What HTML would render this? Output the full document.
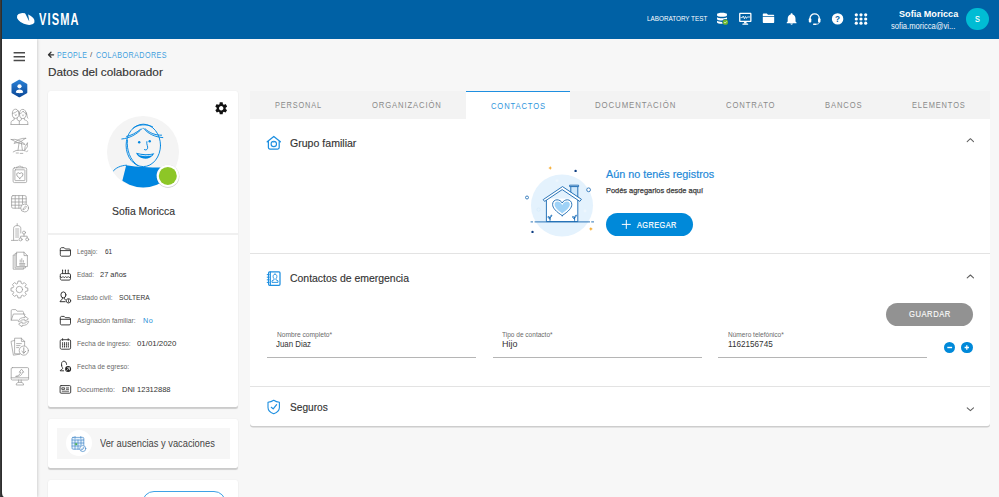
<!DOCTYPE html>
<html lang="es">
<head>
<meta charset="utf-8">
<title>Datos del colaborador</title>
<style>
*{box-sizing:border-box;margin:0;padding:0}
html,body{width:999px;height:497px;overflow:hidden;background:#f7f7f7;font-family:"Liberation Sans",sans-serif;color:#333}
body{position:relative}
.abs{position:absolute}
.t{position:absolute;white-space:nowrap;line-height:1}
svg{position:absolute;overflow:visible}
#frame{left:0;top:0;width:2px;height:497px;background:linear-gradient(90deg,#3b3b3b 50%,#2e2e2e 50%);z-index:50}
#hdr{left:0;top:0;width:999px;height:39px;background:#0061a5;z-index:10}
#side{left:2px;top:39px;width:34.5px;height:458px;background:#fff;box-shadow:1px 0 3px rgba(0,0,0,.15);z-index:5;border-bottom-left-radius:2.5px 5px}
.card{position:absolute;background:#fff;border-radius:2.5px;box-shadow:0 1.3px .8px rgba(0,0,0,.17),0 0 2px rgba(0,0,0,.06)}
.hl{position:absolute;height:1px;background:#e4e4e4}
.ul{position:absolute;height:1px;background:#b5b5b5}
.lab{font-size:7.3px;color:#6a6a6a}
.val{font-size:8px;color:#333}
.tab{font-size:8.7px;letter-spacing:1px;color:#8a8a8a}
.sec{font-size:11.3px;color:#333;-webkit-text-stroke:.15px #333}
</style>
</head>
<body>

<!-- ===== header ===== -->
<div id="hdr" class="abs">
  <svg style="left:0;top:0" width="90" height="39" viewBox="0 0 90 39">
    <ellipse cx="25.8" cy="19" rx="9.3" ry="5.2" transform="rotate(22 25.8 19)" fill="#fff"/>
    <path d="M24.2 11.5L27.8 12.3L29.3 21.5Z" fill="#0061a5"/>
  </svg>
  <span class="t" style="left:38.9px;top:12px;font-size:15.8px;font-weight:bold;letter-spacing:1.6px;color:#fff;transform:scaleX(0.7000);transform-origin:0 50%">VISMA</span>
  <span class="t" style="left:647px;top:16px;font-size:6.9px;color:#fff;transform:scaleX(0.9189);transform-origin:0 50%">LABORATORY TEST</span>
  <span class="t" style="left:898.8px;top:9px;font-size:9.7px;font-weight:bold;color:#fff;transform:scaleX(0.9397);transform-origin:0 50%">Sofia Moricca</span>
  <span class="t" style="left:891px;top:23px;font-size:8.2px;color:#f4f8fc;transform:scaleX(0.9281);transform-origin:0 50%">sofia.moricca@vi...</span>
  <div class="abs" style="left:966.3px;top:7.6px;width:22.4px;height:22.4px;border-radius:50%;background:#00bcd4"></div>
  <span class="t" style="left:975.1px;top:15px;font-size:8.3px;color:#fff;-webkit-text-stroke:.15px #fff;transform:scaleX(0.8654);transform-origin:0 50%">S</span>
</div>

<!-- ===== sidebar ===== -->
<div class="abs" style="left:0;top:485px;width:9px;height:12px;background:#333;z-index:4"></div>
<div id="side" class="abs"></div>
<div id="frame" class="abs"></div>

<!-- ===== breadcrumb / title ===== -->
<span class="t" style="left:56.8px;top:51px;font-size:8.4px;letter-spacing:.5px;color:#3f9fde;transform:scaleX(0.8326);transform-origin:0 50%">PEOPLE</span>
<span class="t" style="left:90.3px;top:51px;font-size:7.9px;color:#555;transform:scaleX(1.0440);transform-origin:0 50%">/</span>
<span class="t" style="left:96px;top:51px;font-size:8.4px;letter-spacing:.5px;color:#3f9fde;transform:scaleX(0.8563);transform-origin:0 50%">COLABORADORES</span>
<span class="t" style="left:48.2px;top:66px;font-size:11.6px;color:#333;-webkit-text-stroke:.15px #333;transform:scaleX(1.0120);transform-origin:0 50%">Datos del colaborador</span>

<!-- ===== left cards ===== -->
<div class="card" style="left:48px;top:91px;width:190px;height:315.5px"></div>
<div class="hl" style="left:48px;top:233.2px;width:190px;height:1.6px;background:#f0f0f0"></div>
<div class="abs" style="left:107px;top:116px;width:72px;height:72px;border-radius:50%;background:#f4f4f4"></div>
<span class="t" style="left:111.7px;top:207px;font-size:10.4px;color:#333;-webkit-text-stroke:.12px #333;transform:scaleX(1.0007);transform-origin:0 50%">Sofia Moricca</span>

<span class="t lab" style="left:77px;top:248px;transform:scaleX(0.8558);transform-origin:0 50%">Legajo:</span><span class="t val" style="left:105.1px;top:248px;transform:scaleX(0.8084);transform-origin:0 50%">61</span>
<span class="t lab" style="left:77px;top:271px;transform:scaleX(0.8911);transform-origin:0 50%">Edad:</span><span class="t val" style="left:100.4px;top:271px;transform:scaleX(0.9308);transform-origin:0 50%">27 años</span>
<span class="t lab" style="left:77px;top:294px;transform:scaleX(0.9117);transform-origin:0 50%">Estado civil:</span><span class="t val" style="left:118.7px;top:294px;transform:scaleX(0.8354);transform-origin:0 50%">SOLTERA</span>
<span class="t lab" style="left:77px;top:317px;transform:scaleX(0.9276);transform-origin:0 50%">Asignación familiar:</span><span class="t val" style="left:143px;top:317px;color:#2a8fd8;letter-spacing:.6px;transform:scaleX(0.9043);transform-origin:0 50%">No</span>
<span class="t lab" style="left:77px;top:340px;transform:scaleX(0.9192);transform-origin:0 50%">Fecha de ingreso:</span><span class="t val" style="left:137.4px;top:340px;transform:scaleX(0.9813);transform-origin:0 50%">01/01/2020</span>
<span class="t lab" style="left:77px;top:363px;transform:scaleX(0.9191);transform-origin:0 50%">Fecha de egreso:</span>
<span class="t lab" style="left:77px;top:386px;transform:scaleX(0.9658);transform-origin:0 50%">Documento:</span><span class="t val" style="left:121.7px;top:386px;transform:scaleX(0.9400);transform-origin:0 50%">DNI 12312888</span>

<div class="card" style="left:48px;top:419px;width:190px;height:49px"></div>
<div class="abs" style="left:57px;top:428px;width:173px;height:30.6px;background:#f6f6f6"></div>
<div class="abs" style="left:65.5px;top:430.2px;width:26px;height:26px;border-radius:50%;background:#fff"></div>
<span class="t" style="left:100.1px;top:438px;font-size:11.3px;color:#444;transform:scaleX(0.8234);transform-origin:0 50%">Ver ausencias y vacaciones</span>

<div class="card" style="left:48px;top:480px;width:190px;height:40px"></div>
<div class="abs" style="left:141.6px;top:490.6px;width:84px;height:24px;border:1px solid #3fa2e6;border-radius:12px"></div>

<!-- ===== tabs + main panel ===== -->
<div class="abs" style="left:250px;top:91px;width:740px;height:27.6px;background:#f3f3f3"></div>
<div class="card" style="left:250px;top:118.5px;width:740px;height:307.9px;border-radius:0 0 3px 3px;box-shadow:0 1.4px .6px rgba(0,0,0,.17)"></div>
<div class="abs" style="left:466px;top:90.8px;width:104.2px;height:28.2px;background:#fff;border-top:1.6px solid #1f8fe0"></div>
<span class="t tab" style="left:275px;top:101px;transform:scaleX(0.8467);transform-origin:0 50%">PERSONAL</span>
<span class="t tab" style="left:371.6px;top:101px;transform:scaleX(0.8823);transform-origin:0 50%">ORGANIZACIÓN</span>
<span class="t tab" style="left:491px;top:102px;color:#2f95dc;transform:scaleX(0.8745);transform-origin:0 50%">CONTACTOS</span>
<span class="t tab" style="left:595.4px;top:101px;transform:scaleX(0.9016);transform-origin:0 50%">DOCUMENTACIÓN</span>
<span class="t tab" style="left:725.8px;top:101px;transform:scaleX(0.8844);transform-origin:0 50%">CONTRATO</span>
<span class="t tab" style="left:825.1px;top:101px;transform:scaleX(0.8752);transform-origin:0 50%">BANCOS</span>
<span class="t tab" style="left:911.9px;top:101px;transform:scaleX(0.8594);transform-origin:0 50%">ELEMENTOS</span>

<div class="hl" style="left:250px;top:253px;width:740px;height:1.3px;background:#e3e3e3"></div>
<div class="hl" style="left:250px;top:386px;width:740px;height:1.3px;background:#e3e3e3"></div>

<span class="t sec" style="left:290px;top:138px;transform:scaleX(0.9358);transform-origin:0 50%">Grupo familiar</span>
<span class="t sec" style="left:289.8px;top:273px;transform:scaleX(0.9244);transform-origin:0 50%">Contactos de emergencia</span>
<span class="t sec" style="left:289.8px;top:402px;transform:scaleX(0.8960);transform-origin:0 50%">Seguros</span>

<!-- empty state -->
<span class="t" style="left:606.2px;top:168px;font-size:11.7px;color:#2389d8;-webkit-text-stroke:.2px #2389d8;transform:scaleX(0.9252);transform-origin:0 50%">Aún no tenés registros</span>
<span class="t" style="left:606.2px;top:187px;font-size:8.1px;color:#3a3a3a;-webkit-text-stroke:.25px #3a3a3a;transform:scaleX(0.9173);transform-origin:0 50%">Podés agregarlos desde aquí</span>
<div class="abs" style="left:606px;top:213px;width:86.8px;height:22.8px;border-radius:12px;background:#0089d9"></div>
<span class="t" style="left:637px;top:221px;font-size:8.7px;letter-spacing:.5px;color:#fff;-webkit-text-stroke:.2px #fff;transform:scaleX(0.8460);transform-origin:0 50%">AGREGAR</span>

<!-- form -->
<div class="abs" style="left:886.4px;top:303px;width:86.6px;height:23px;border-radius:12px;background:#929292"></div>
<span class="t" style="left:908.7px;top:310px;font-size:8.8px;letter-spacing:.6px;color:#fbfbfb;-webkit-text-stroke:.15px #fbfbfb;transform:scaleX(0.8676);transform-origin:0 50%">GUARDAR</span>

<span class="t lab" style="left:276.7px;top:331px;font-size:7px;transform:scaleX(0.9488);transform-origin:0 50%">Nombre completo*</span>
<span class="t val" style="left:276.2px;top:339px;font-size:9.5px;transform:scaleX(0.8284);transform-origin:0 50%">Juan Diaz</span>
<div class="ul" style="left:267px;top:356.6px;width:208.6px"></div>

<span class="t lab" style="left:501.8px;top:331px;font-size:7px;transform:scaleX(0.9330);transform-origin:0 50%">Tipo de contacto*</span>
<span class="t val" style="left:501.8px;top:339px;font-size:9.5px;transform:scaleX(0.9405);transform-origin:0 50%">Hijo</span>
<div class="ul" style="left:493px;top:356.6px;width:208.6px"></div>

<span class="t lab" style="left:727.9px;top:331px;font-size:7px;transform:scaleX(0.9356);transform-origin:0 50%">Número telefónico*</span>
<span class="t val" style="left:728.4px;top:339px;font-size:9.5px;transform:scaleX(0.8573);transform-origin:0 50%">1162156745</span>
<div class="ul" style="left:718.4px;top:356.6px;width:208.4px"></div>

<div class="abs" style="left:943.9px;top:341.7px;width:11.6px;height:11.6px;border-radius:50%;background:#0089d9"></div>
<div class="abs" style="left:961px;top:341.7px;width:11.6px;height:11.6px;border-radius:50%;background:#0089d9"></div>

<!-- ===== icon overlay ===== -->
<svg style="left:0;top:0;z-index:60;pointer-events:none" width="999" height="497" viewBox="0 0 999 497" fill="none">
<defs>
  <linearGradient id="hexg" x1="0" y1="0" x2="0" y2="1"><stop offset="0" stop-color="#2a7fd4"/><stop offset="1" stop-color="#0c4a9a"/></linearGradient>
</defs>
<!-- hamburger -->
<g stroke="#4a4a4a" stroke-width="1.5"><path d="M13.6 52.8H25M13.6 56.7H25M13.6 60.6H25"/></g>
<!-- hexagon active -->
<path d="M19.4 80.6L26.4 84.6V92.4L19.4 96.4L12.4 92.4V84.6Z" fill="url(#hexg)" stroke="url(#hexg)" stroke-width="1.8" stroke-linejoin="round"/>
<circle cx="19.5" cy="86.3" r="2.1" fill="#fff"/>
<path d="M15.8 92.6C15.8 90.6 17.4 89.6 19.5 89.6C21.6 89.6 23.2 90.6 23.2 92.6C22 93.4 17 93.4 15.8 92.6Z" fill="#fff"/>
<!-- sidebar grey icons -->
<g stroke="#979797" stroke-width=".72" stroke-linecap="round" stroke-linejoin="round">
  <!-- people -->
  <g>
    <ellipse cx="15.7" cy="113.8" rx="3.4" ry="4.6"/>
    <path d="M12.4 113.4C14.4 113.2 16.600000000000001 112 17.6 110.4C18 111.6 18.6 112.4 19.1 112.8"/>
    <ellipse cx="22.9" cy="114" rx="3.4" ry="4.6"/>
    <path d="M19.6 113.8C21 113.4 22.4 112.4 23.2 111C24 112.6 25.2 113.6 26.3 113.8"/>
    <path d="M26.2 112.4C27.4 114.4 26.6 117 27.8 118.2"/>
    <path d="M15.2 114.6L15.8 116L16.4 114.6M22.4 114.8L23 116.2L23.6 114.8" stroke-width=".5"/>
    <path d="M11 124.5V122.6C11 120.8 12.8 120.4 14.2 119.8V118M17.2 118V119.8L19.3 121"/>
    <path d="M27.8 124.5V122.6C27.8 120.8 26 120.4 24.4 119.8V118.2M21.4 118.2V119.8L19.3 121V124.5"/>
    <path d="M11 124.5H27.8"/>
  </g>
  <!-- palm island -->
  <g>
    <path d="M11.2 139.5Q18.4 138.2 25.2 144.5Q17.4 143.8 11.2 139.5Z"/>
    <path d="M25.7 138.3Q19.3 137.6 13.9 143.4Q20.7 143 25.7 138.3Z"/>
    <path d="M19.1 142.6L18 150.2M21.3 142.6L22.4 150.2"/>
    <path d="M27.4 143.1Q28.8 147.2 24.6 150.4Q24.2 146 27.4 143.1Z"/>
    <path d="M13.2 151.9Q16 149.8 19.4 150.3Q23 149.8 25.4 150.9M26.6 151.6L27.8 150.9"/>
    <path d="M16.2 153H18.4M20.2 153.4H22.8"/>
  </g>
  <!-- clipboard heart -->
  <g>
    <rect x="13.1" y="167.8" width="13.6" height="14.8" rx="1.4"/>
    <rect x="14.9" y="169.8" width="10" height="10.8" rx=".5"/>
    <path d="M16.6 167.8V167H18.2C18.2 165.8 21.4 165.8 21.4 167H23V167.8"/>
    <path d="M19.8 178.4C17.2 176.6 16.4 175.2 16.8 173.8C17.3 172.4 19.2 172.4 19.8 173.8C20.4 172.4 22.3 172.4 22.8 173.8C23.2 175.2 22.400000000000002 176.6 19.8 178.4Z" stroke-width=".85"/>
  </g>
  <!-- calendar edit -->
  <g>
    <rect x="11.6" y="195.6" width="14.6" height="12.6" rx="1.4"/>
    <path d="M11.6 198.8H26.2M11.6 202H26.2M11.6 205.2H22M15.2 195.6V208.2M18.9 195.6V208.2M22.5 195.6V204"/>
    <circle cx="24.6" cy="208" r="3.9" fill="#fff"/>
    <path d="M23 209.6L23.4 208.2L25.6 206L26.6 207L24.4 209.2Z"/>
  </g>
  <!-- building org -->
  <g>
    <path d="M13.6 240.2V228.4C13.6 226.4 15 225.6 17.2 225.6C19.4 225.6 20.8 226.4 20.8 228.4V233"/>
    <path d="M17.2 225.6V223.6M11.4 240.4H18"/>
    <path d="M15.6 229H18.8M15.6 231H18.8M15.6 233H18.8M15.6 235H18.8M15.6 237H18.8"/>
    <circle cx="24" cy="232.6" r="1.5"/><circle cx="20.6" cy="239.4" r="1.5"/><circle cx="27.2" cy="239.4" r="1.5"/>
    <path d="M24 234.1V236.2M20.6 237.9V236.2H27.2V237.9"/>
  </g>
  <!-- docs chart -->
  <g>
    <path d="M16.8 252.2H24L27.4 255.6V266.6H16.8Z"/>
    <path d="M24 252.2V255.6H27.4"/>
    <path d="M16.8 253.6H15V268H25.4V266.6"/>
    <path d="M15 255H13.2V269.2H23.6V268"/>
    <path d="M19.6 263.8H24.8" stroke-width="1"/>
    <path d="M20.2 262.2V260M21.8 262.2V258.6M23.4 262.2V260.6M19.8 265.2H24.6"/>
  </g>
  <!-- gear -->
  <g>
    <circle cx="19.4" cy="289.5" r="3.2"/>
    <path d="M17.5 283.3L18.0 281.1L20.8 281.1L21.3 283.3L22.5 283.8L24.3 282.6L26.3 284.6L25.1 286.4L25.6 287.6L27.8 288.1L27.8 290.9L25.6 291.4L25.1 292.6L26.3 294.4L24.3 296.4L22.5 295.2L21.3 295.7L20.8 297.9L18.0 297.9L17.5 295.7L16.3 295.2L14.5 296.4L12.5 294.4L13.7 292.6L13.2 291.4L11.0 290.9L11.0 288.1L13.2 287.6L13.7 286.4L12.5 284.6L14.5 282.6L16.3 283.8Z" stroke-linejoin="round" stroke-width=".9" stroke="#a3a3a3"/>
  </g>
  <!-- folder sync -->
  <g>
    <path d="M11.2 320.2V310.8C11.2 310 11.7 309.6 12.4 309.6H15.8L17.2 311.2H22.4C23.1 311.2 23.5 311.7 23.5 312.4V314"/>
    <path d="M17.6 320.2H11.2L13.4 314H25L24.4 315.8"/>
    <path d="M18.4 321.2C18.8 318.6 21.4 317.4 25 317.6V316.2L28.4 318.8L25 321.2V319.8C22.4 319.6 20.6 320 19.8 321.6Z" fill="#fff"/>
    <path d="M28.6 321.8C28.2 324.4 25.6 325.6 22 325.4V326.8L18.6 324.2L22 321.8V323.2C24.6 323.4 26.4 323 27.2 321.4Z" fill="#fff"/>
  </g>
  <!-- docs download -->
  <g>
    <path d="M19.6 353.8H14.6V338.2H21.4L24.6 341.4V346.2"/>
    <path d="M21.4 338.2V341.4H24.6"/>
    <path d="M14.6 340.4L11 341.4L13.4 355.2L19.8 354.2"/>
    <path d="M16.6 343.6H21.4M16.6 345.6H20M16.6 347.6H18.8"/>
    <circle cx="23.8" cy="350.6" r="4.6" fill="#fff"/>
    <path d="M23.8 347.8V353M21.9 351.3L23.8 353.2L25.7 351.3" stroke-width=".9"/>
  </g>
  <!-- monitor arrow -->
  <g>
    <rect x="11.2" y="367.6" width="17.4" height="12.4" rx="1.2"/>
    <path d="M11.2 377.8H28.6M18.6 380V382.4M21.2 380V382.4M16.2 384.6C16.2 383.2 17.2 382.6 18.6 382.4H21.2C22.6 382.6 23.6 383.2 23.6 384.6Z"/>
    <path d="M16 376.4C18.8 375.8 20.4 374.2 20.6 372.2H19.2L21.5 369.2L23.8 372.2H22.4C22.2 375 19.6 377 16 376.4Z"/>
  </g>
</g>
<!-- header icons -->
<g fill="#fff">
  <!-- database -->
  <path d="M717 14.3C717 12.3 727 12.3 727 14.3V15.3C727 17.3 717 17.3 717 15.3Z"/>
  <path d="M717 17.2C718.6 18.7 725.4 18.7 727 17.2V18.9C727 20.9 717 20.9 717 18.9Z"/>
  <path d="M717 20.8C718.6 22.3 725.4 22.3 727 20.8V22.2C727 24.2 717 24.2 717 22.2Z"/>
  <circle cx="725.4" cy="22.2" r="3.1" fill="#0061a5"/>
  <circle cx="725.4" cy="22.2" r="2.6" fill="#6fb82c"/>
  <path d="M724.2 22.2L725.1 23.1L726.7 21.4" stroke="#fff" stroke-width=".7" fill="none"/>
  <!-- monitor -->
  <path d="M740.2 12.8H750.4C751 12.8 751.5 13.3 751.5 13.9V21C751.5 21.6 751 22.1 750.4 22.1H740.2C739.6 22.1 739.1 21.6 739.1 21V13.9C739.1 13.3 739.6 12.8 740.2 12.8ZM740.4 14.1V20.8H750.2V14.1Z" fill-rule="evenodd"/>
  <path d="M740.6 17.6H742.4L743.2 16L744.4 18.8L745.4 16.4L746.4 18.4L747.2 17H750" stroke="#fff" stroke-width=".8" fill="none"/>
  <path d="M744.2 22.1H746.4L746.8 23.6H743.8Z"/>
  <rect x="742.4" y="23.6" width="5.8" height="1.2" rx=".4"/>
  <!-- folder -->
  <path d="M762.8 14.4C762.8 13.8 763.3 13.4 763.8 13.4H766.8L768 14.7H773.2C773.8 14.7 774.2 15.1 774.2 15.7V16H762.8Z"/>
  <path d="M762.8 16.7H774.2V22C774.2 22.6 773.8 23 773.2 23H763.8C763.2 23 762.8 22.6 762.8 22Z"/>
  <!-- bell -->
  <path d="M791.6 13.2C792.2 13.2 792.6 13.6 792.6 14.2V14.5C794.4 15 795.5 16.6 795.5 18.7V21.4L796.5 22.6V23.3H786.7V22.6L787.7 21.4V18.7C787.7 16.6 788.8 15 790.6 14.5V14.2C790.6 13.6 791 13.2 791.6 13.2Z"/>
  <path d="M790.3 23.6H792.9C792.9 24.3 792.3 24.8 791.6 24.8C790.9 24.8 790.3 24.3 790.3 23.6Z"/>
  <!-- headset -->
  <path d="M810 19.4V18.6C810 15.8 812 13.9 814.6 13.9C817.2 13.9 819.3 15.8 819.3 18.6V19.4" stroke="#fff" stroke-width="1.3" fill="none"/>
  <rect x="808.8" y="18.2" width="2.5" height="4.4" rx="1"/>
  <rect x="818" y="18.2" width="2.5" height="4.4" rx="1"/>
  <path d="M819.3 22.2C819.3 23.6 818 24.2 816 24.2" stroke="#fff" stroke-width=".8" fill="none"/>
  <rect x="813" y="23.5" width="3.4" height="1.4" rx=".7"/>
  <!-- help -->
  <circle cx="837.6" cy="18.9" r="5.7"/>
  <!-- grid -->
  <g>
    <circle cx="856.3" cy="14.8" r="1.6"/><circle cx="861" cy="14.8" r="1.6"/><circle cx="865.7" cy="14.8" r="1.6"/>
    <circle cx="856.3" cy="19" r="1.6"/><circle cx="861" cy="19" r="1.6"/><circle cx="865.7" cy="19" r="1.6"/>
    <circle cx="856.3" cy="23.2" r="1.6"/><circle cx="861" cy="23.2" r="1.6"/><circle cx="865.7" cy="23.2" r="1.6"/>
  </g>
</g>
<text x="837.6" y="21.8" text-anchor="middle" font-family="Liberation Sans, sans-serif" font-weight="bold" font-size="8.2" fill="#0061a5">?</text>

<!-- breadcrumb arrow -->
<path d="M53.6 54.8H48.9M51 52.3L48.5 54.8L51 57.3" stroke="#333" stroke-width="1.3" stroke-linejoin="round" stroke-linecap="round"/>

<!-- card gear -->
<g transform="translate(213.7 100.8) scale(.625)"><path fill="#111" d="M19.14,12.94c0.04-0.3,0.06-0.61,0.06-0.94c0-0.32-0.02-0.64-0.07-0.94l2.03-1.58c0.18-0.14,0.23-0.41,0.12-0.61l-1.92-3.32c-0.12-0.22-0.37-0.29-0.59-0.22l-2.39,0.96c-0.5-0.38-1.03-0.7-1.62-0.94L14.4,2.81c-0.04-0.24-0.24-0.41-0.48-0.41h-3.84c-0.24,0-0.43,0.17-0.47,0.41L9.25,5.35C8.66,5.59,8.12,5.92,7.63,6.29L5.24,5.33c-0.22-0.08-0.47,0-0.59,0.22L2.74,8.87C2.62,9.08,2.66,9.34,2.86,9.48l2.03,1.58C4.84,11.36,4.8,11.69,4.8,12s0.02,0.64,0.07,0.94l-2.03,1.58c-0.18,0.14-0.23,0.41-0.12,0.61l1.92,3.32c0.12,0.22,0.37,0.29,0.59,0.22l2.39-0.96c0.5,0.38,1.03,0.7,1.62,0.94l0.36,2.54c0.05,0.24,0.24,0.41,0.48,0.41h3.84c0.24,0,0.44-0.17,0.47-0.41l0.36-2.54c0.59-0.24,1.13-0.56,1.62-0.94l2.39,0.96c0.22,0.08,0.47,0,0.59-0.22l1.92-3.32c0.12-0.22,0.07-0.47-0.12-0.61L19.14,12.94z M12,15.6c-1.98,0-3.6-1.62-3.6-3.6s1.62-3.6,3.6-3.6s3.6,1.62,3.6,3.6S13.98,15.6,12,15.6z"/></g>

<!-- avatar illustration -->
<clipPath id="avc"><circle cx="143.2" cy="151.6" r="35.9"/></clipPath>
<g clip-path="url(#avc)">
  <path d="M126.2 165.2C138 167 150 167.6 160.6 167.6L163 190H120Z" fill="#0086e0"/>
  <g stroke="#0086e0" stroke-width=".95" stroke-linecap="round" fill="none">
    <path d="M112.6 171.8C115.6 167.6 120.6 165.6 126.4 165.2"/>
    <ellipse cx="143.3" cy="145.4" rx="17.2" ry="21.2"/>
    <path d="M127.4 140C126.4 150 130 160 137.6 165.4"/>
    <path d="M142 128.6C136.6 134.6 129.6 138.2 121.8 139M143.6 128.2C147.6 133.6 154.6 137 162.8 137.6M140.4 129.4C136 133 131 135.6 126.6 136.4M145.4 129C149.6 133 155.6 135.4 161.6 135.2M133 128.2C137.6 124.4 146.4 123.6 152.6 126.8"/>
    <path d="M146.8 141.6C146 144.6 148.6 146.4 147.4 148.8C146.8 150 145.4 150.4 144.4 149.6"/>
  </g>
  <circle cx="139.2" cy="142.3" r="1.2" fill="#0086e0"/><circle cx="149.7" cy="141.3" r="1.2" fill="#0086e0"/>
  <path d="M136 152.8C141.6 154.6 148.6 154.6 154.4 153.2C152 157.4 147.4 159.2 143.6 158.6C139.8 158 137 155.6 136 152.8Z" fill="#0086e0"/>
  <path d="M138.6 154.6C142.6 156 148 156 151.8 155" stroke="#fff" stroke-width=".8" fill="none"/>
</g>
<circle cx="167.9" cy="176.4" r="11.6" fill="#000" opacity=".1"/><circle cx="167.9" cy="176.3" r="11.3" fill="#000" opacity=".12"/>
<circle cx="167.8" cy="175.9" r="11.2" fill="#fff"/>
<circle cx="167.8" cy="175.9" r="9" fill="#8dc627"/>

<!-- card row icons -->
<g stroke="#2b2b2b" stroke-width=".9" stroke-linejoin="round" stroke-linecap="round">
  <path d="M60.3 249C60.3 248.2 60.8 247.7 61.6 247.7H64.2L65.4 249H69.2C70 249 70.5 249.5 70.5 250.3V254.9C70.5 255.700000000000003 70 256.2 69.2 256.2H61.6C60.8 256.2 60.3 255.7 60.3 254.9ZM60.3 250.6H70.5"/>
  <path d="M60.3 317.7C60.3 316.9 60.8 316.4 61.6 316.4H64.2L65.4 317.7H69.2C70 317.7 70.5 318.2 70.5 319V323.6C70.5 324.4 70 324.9 69.2 324.9H61.6C60.8 324.9 60.3 324.4 60.3 323.6ZM60.3 319.3H70.5"/>
  <!-- cake -->
  <path d="M60.3 274.8C60.3 274 60.8 273.600000000000003 61.6 273.6H69.2C70 273.6 70.5 274 70.5 274.8V278.8C70.5 279.6 70 280.1 69.2 280.1H61.6C60.8 280.1 60.3 279.6 60.3 278.8ZM60.3 276.6C61.2 277.8 62.2 277.8 63 276.6C63.8 277.8 64.8 277.8 65.6 276.6C66.4 277.8 67.4 277.8 68.2 276.6C69 277.8 69.8 277.8 70.5 276.6M62.6 273.4V271.4M65.4 273.4V271.4M68.2 273.4V271.4"/>
  <path d="M62.6 270.2V270.4M65.4 270.2V270.4M68.2 270.2V270.4" stroke-width="1.2"/>
  <!-- person info -->
  <ellipse cx="63.4" cy="294.9" rx="2.5" ry="3" stroke-width=".95"/>
  <path d="M62.4 297.8V298.8C62.4 299.8 60.4 300 60 301.7H65.2M64.4 297.8V298.8C64.4 299.4 65 299.6 65.6 299.8" stroke-width=".95"/>
  <circle cx="68.5" cy="300.8" r="2.2" stroke-width=".85"/>
  <path d="M68.5 300.5V302M68.5 299.5V299.6" stroke-width=".75"/>
  <!-- calendar -->
  <path d="M60.2 341C60.2 340.2 60.7 339.7 61.5 339.7H69.3C70.1 339.7 70.6 340.2 70.6 341V347.9C70.6 348.7 70.1 349.2 69.3 349.2H61.5C60.7 349.2 60.2 348.7 60.2 347.9ZM62.6 338.7V340.4M68.2 338.7V340.4"/>
  <path d="M62.600000000000001 342.6V347.4M64.5 342.6V347.4M66.4 342.6V347.4M68.3 342.6V347.4" stroke-width=".9" stroke-dasharray=".9 .9"/>
  <!-- person arrow -->
  <path d="M61.6 365.4C61 362.6 62.4 361.2 63.8 361.2C65.4 361.2 66.6 362.4 66.6 364.4M61.6 365.4C61.6 366.6 62.2 367.4 62.6 367.8V368.6C62.6 369.4 60.6 369.4 60.2 370.8H63.6" stroke-width=".95"/>
  <circle cx="68.1" cy="369" r="3" fill="#222" stroke="none"/>
  <path d="M66.8 370.4L69.2 368M67.5 367.7H69.5V369.7" stroke="#fff" stroke-width=".7"/>
  <!-- id card -->
  <rect x="60.1" y="385.6" width="10.6" height="7.6" rx="1"/>
  <path d="M62.2 387.8H64.6V389.4H62.2ZM66.4 387.9H68.6M66.4 389.3H68.6M62.2 391.2H68.6" stroke-width=".8"/>
</g>

<!-- calendar in white circle -->
<g stroke="#3d83c6" stroke-width=".65" stroke-linejoin="round" stroke-linecap="round">
  <rect x="72" y="437.4" width="11.8" height="11.8" rx="1" fill="#e6f2fc"/>
  <path d="M72 440H83.8M75 436.4V438.4M80.8 436.4V438.4M75 440V449.2M78 440V449.2M81 440V446M72 443H83.8M72 446H80"/>
  <rect x="75.4" y="443.4" width="1.6" height="1.6" fill="#4caf50" stroke="#4caf50" stroke-width=".4"/>
  <circle cx="82.8" cy="448.6" r="3" fill="#fff"/>
  <path d="M81.6 449.8L81.9 448.8L83.5 447.2L84.2 447.9L82.6 449.5Z" stroke-width=".6"/>
</g>

<!-- section icons -->
<g stroke="#1e8fe0" stroke-width="1.25" stroke-linejoin="round" stroke-linecap="round">
  <path d="M267.2 141.8L273.8 136.4L280.4 141.8M268.4 141V147.6C268.4 148.5 268.9 149 269.8 149H277.8C278.7 149 279.2 148.5 279.2 147.6V141"/>
  <circle cx="273.8" cy="143.9" r="2.7" stroke-width="1.1"/>
  <path d="M272.2 142.2C272.8 141.4 273.6 141.6 273.8 142.4C274 141.6 274.8 141.4 275.4 142.2" stroke-width=".8"/>
  <!-- contact book -->
  <rect x="268.6" y="271.9" width="11.4" height="13.4" rx="1"/>
  <path d="M270.4 271.9V285.3" stroke-width="1"/>
  <path d="M267.2 274.6H269.2M267.2 277.2H269.2M267.2 279.8H269.2M267.2 282.4H269.2" stroke-width="1"/>
  <path d="M275 274.2C276.3 274.2 276.9 275.2 276.9 276.4C276.9 277.5 276.4 278.4 275.9 278.8V279.8L278 280.8V282.4H272V280.8L274.1 279.8V278.8C273.6 278.4 273.1 277.5 273.1 276.4C273.1 275.2 273.7 274.2 275 274.2Z" stroke-width=".9"/>
  <!-- shield -->
  <path d="M273.7 400.2C275.6 401.4 277.6 402 279.4 402.2V407.4C279.4 410.2 277 412.4 273.7 413.8C270.4 412.4 268 410.2 268 407.4V402.2C269.8 402 271.8 401.4 273.7 400.2Z" stroke-width="1.1"/>
  <path d="M271.3 407.3L273.2 408.9L276.6 404.7" stroke-width="1.2"/>
</g>

<!-- chevrons -->
<g stroke="#5f5f5f" stroke-width="1.05" stroke-linecap="round" stroke-linejoin="round">
  <path d="M967.2 141.6L970.4 138.7L973.5 141.6"/>
  <path d="M967.2 277.9L970.4 275L973.5 277.9"/>
  <path d="M967.2 407.8L970.4 410.7L973.5 407.8"/>
</g>

<!-- button plus & circle icons -->
<path d="M621.8 224.4H630.8M626.3 219.9V228.9" stroke="#fff" stroke-width="1"/>
<path d="M947.3 347.5H952.1" stroke="#fff" stroke-width="1.4"/>
<path d="M964.6 347.5H969M966.8 345.3V349.7" stroke="#fff" stroke-width="1.3"/>

<!-- empty state illustration -->
<circle cx="562" cy="205.5" r="31" fill="#e4f2fd"/>
<circle cx="547" cy="202" r="1.6" fill="#edf6fd"/><circle cx="585" cy="211" r="1.4" fill="#edf6fd"/><circle cx="557" cy="180.6" r="1.4" fill="#edf6fd"/><circle cx="538.6" cy="209.6" r="1.7" fill="none" stroke="#d3e9fa" stroke-width=".6"/>
<g stroke="#1566b0" stroke-width=".9" stroke-linejoin="round" stroke-linecap="round">
  <path d="M546.4 198.6V221.6H577.8V198.6" fill="#fff"/>
  <path d="M570.8 192.4V186.4H577.8V198" fill="#cfe8fb"/>
  <path d="M570 185.2H578.6V186.6H570Z" fill="#fff"/>
  <path d="M562.2 186.8L543.2 199.6L544.6 201.4L562.2 189.6L579.8 201.4L581.2 199.6Z" fill="#fff"/>
  <path d="M562.2 215.6C556 211.600000000000001 552.6 208 552.6 204.4C552.6 201.6 554.6 199.8 557 199.8C559.2 199.8 561.2 201 562.2 203C563.2 201 565.2 199.8 567.4 199.8C569.8 199.8 571.8 201.6 571.8 204.4C571.8 208 568.4 211.6 562.2 215.6Z" fill="#fff"/>
  <path d="M562.2 213.4C557.4 210.2 554.6 207.2 554.6 204.6C554.6 202.8 555.8 201.6 557.4 201.6C559.4 201.6 561.2 203 562.2 205.2C563.2 203 565 201.6 567 201.6C568.6 201.6 569.8 202.8 569.8 204.6C569.8 207.2 567 210.2 562.2 213.4Z" fill="#9fd2f7" stroke="none"/>
  <path d="M535 221.9H589.6M531 221.9H532.6M591.6 221.9H593.6"/>
  <g stroke-width=".7">
    <path d="M550 221.4V217.4M550 219C548.4 218.600000000000001 547.8 217.6 548 216.4C549.4 216.4 550 217.4 550 219ZM550 217.6C551.4 217.2 552 216.2 551.8 215C550.6 215.2 550 216.2 550 217.6Z" fill="#9fd2f7"/>
    <path d="M574.6 221.4V217.4M574.6 219C573 218.6 572.4 217.6 572.6 216.4C574 216.4 574.6 217.4 574.6 219ZM574.6 217.6C576 217.2 576.6 216.2 576.4 215C575.2 215.2 574.6 216.2 574.6 217.6Z" fill="#9fd2f7"/>
  </g>
</g>
<circle cx="575.6" cy="170.9" r="1.2" fill="#0d3d82"/>
<circle cx="532.5" cy="231.9" r="1.2" fill="#0d3d82"/>
<circle cx="588.6" cy="189.8" r="1.9" fill="#fff" stroke="#1566b0" stroke-width=".8"/>
<circle cx="527" cy="197.5" r="1.5" fill="#fff" stroke="#1566b0" stroke-width=".8"/>
<path d="M550.2 166L550.8 167.4L552.2 168L550.8 168.6L550.2 170L549.6 168.6L548.2 168L549.6 167.4Z" fill="#f5a623"/>
<path d="M590.9 226.9L591.5 228.3L592.9 228.9L591.5 229.5L590.9 230.9L590.3 229.5L588.9 228.9L590.3 228.3Z" fill="#f5a623"/>
</svg>

</body>
</html>
